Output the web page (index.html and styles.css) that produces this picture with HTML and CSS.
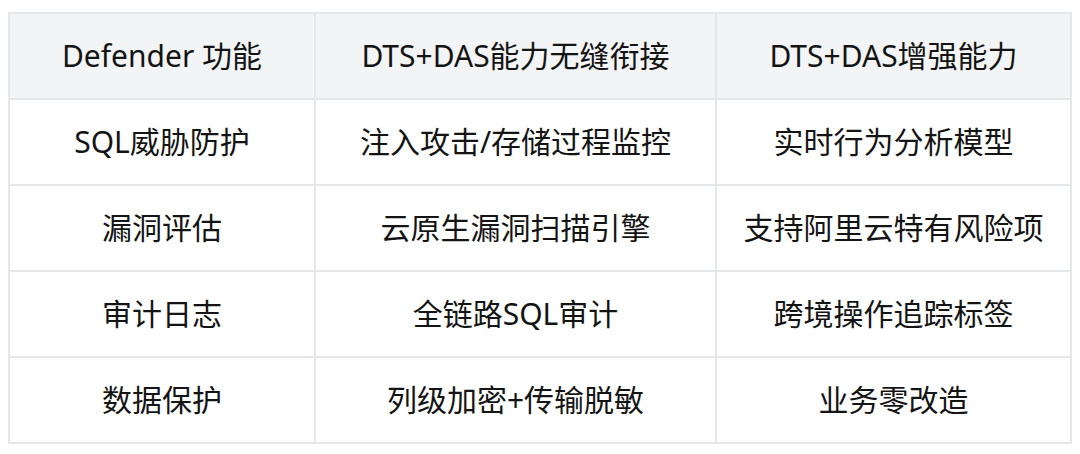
FILE: index.html
```html
<!DOCTYPE html>
<html lang="zh-CN">
<head>
<meta charset="utf-8">
<link rel="stylesheet" href="styles.css">
</head>
<body>
<div class="wrap">
<table class="cmp">
  <colgroup>
    <col class="c1">
    <col class="c2">
    <col class="c3">
  </colgroup>
  <thead>
    <tr><th>Defender 功能</th><th>DTS+DAS能力无缝衔接</th><th>DTS+DAS增强能力</th></tr>
  </thead>
  <tbody>
    <tr><td>SQL威胁防护</td><td>注入攻击/存储过程监控</td><td>实时行为分析模型</td></tr>
    <tr><td>漏洞评估</td><td>云原生漏洞扫描引擎</td><td>支持阿里云特有风险项</td></tr>
    <tr><td>审计日志</td><td>全链路SQL审计</td><td>跨境操作追踪标签</td></tr>
    <tr><td>数据保护</td><td>列级加密+传输脱敏</td><td>业务零改造</td></tr>
  </tbody>
</table>
</div>
</body>
</html>
```

FILE: styles.css
```css
html, body {
  margin: 0;
  padding: 0;
  background: #ffffff;
}
.wrap {
  padding: 12px 10px 12px 8px;
}
.cmp {
  border-collapse: collapse;
  table-layout: fixed;
  width: 1062px;
  font-family: "Noto Sans", "Noto Sans CJK SC", sans-serif;
  font-size: 30px;
  color: #141414;
}
.c1 { width: 306px; }
.c2 { width: 401px; }
.c3 { width: 355px; }
.cmp th, .cmp td {
  border: 2px solid #e6e7ea;
  height: 84px;
  padding: 0 6px;
  text-align: center;
  vertical-align: middle;
  font-weight: 400;
  line-height: 1.2;
}
.cmp thead th {
  background: #f3f4f6;
}
```
